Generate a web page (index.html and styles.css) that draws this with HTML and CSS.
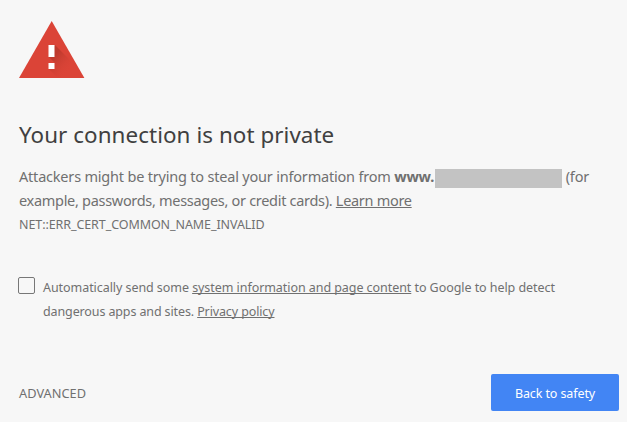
FILE: index.html
```html
<!DOCTYPE html>
<html lang="en">
<head>
    <meta charset="UTF-8">
    <meta name="viewport" content="width=device-width, initial-scale=1.0">
    <title>Privacy error</title>
    <link rel="stylesheet" href="styles.css">
</head>
<body>
    <div class="interstitial">
        <svg class="icon" viewBox="0 0 66 57" width="66" height="57">
            <defs>
                <linearGradient id="shade" gradientUnits="userSpaceOnUse" x1="34" y1="36" x2="50" y2="50">
                    <stop offset="0" stop-color="#a93226" stop-opacity="0.6"/>
                    <stop offset="1" stop-color="#db4437" stop-opacity="0"/>
                </linearGradient>
            </defs>
            <path d="M32.7 0 L65.4 57 H0 Z" fill="#db4437"/>
            <path d="M36 24 L50 38 L61 57 H39 L30 48 L36 42 L30 36 Z" fill="url(#shade)"/>
            <path d="M29.5 24h6v12h-6zM29.5 42h6v6h-6z" fill="#fff"/>
        </svg>

        <h1>Your connection is not private</h1>

        <p class="message">
            <span class="line first">Attackers might be trying to steal your information from <strong>www.</strong><span class="redacted"></span> (for</span>
            <span class="line second">example, passwords, messages, or credit cards). <a href="#">Learn more</a></span>
        </p>
        <div class="error-code">NET::ERR_CERT_COMMON_NAME_INVALID</div>

        <div class="opt-in">
            <span class="checkbox"></span>
            <label>
                <span class="line">Automatically send some <a href="#">system information and page content</a> to Google to help detect</span>
                <span class="line policy">dangerous apps and sites. <a href="#">Privacy policy</a></span>
            </label>
        </div>

        <div class="buttons">
            <span class="details">ADVANCED</span>
            <button class="primary">Back to safety</button>
        </div>
    </div>
</body>
</html>
```
FILE: styles.css
```css
body {
    margin: 0;
    background: #f7f7f7;
    color: #707070;
    font-family: 'Noto Sans', 'Open Sans', sans-serif;
}

.interstitial {
    box-sizing: border-box;
    height: 422px;
    padding: 21px 8px 0 19px;
    overflow: hidden;
    white-space: nowrap;
}

.icon {
    display: block;
}

h1 {
    margin: 41px 0 0;
    color: #404040;
    font-size: 22.4px;
    font-weight: 400;
    letter-spacing: 0.06px;
    line-height: 32px;
}

.message {
    margin: 13px 0 0;
    font-size: 14.5px;
    line-height: 24px;
}

.line {
    display: block;
}

.first {
    letter-spacing: -0.2px;
}

.second {
    letter-spacing: -0.3px;
}

a {
    color: inherit;
    text-underline-offset: 1px;
    text-decoration-skip-ink: none;
}

.redacted {
    display: inline-block;
    width: 127px;
    height: 19px;
    margin: 0 0 0 1px;
    background: #c3c3c3;
    vertical-align: -6px;
}

.error-code {
    margin-top: 1px;
    font-size: 12.5px;
    letter-spacing: -0.08px;
    line-height: 24px;
}

.opt-in {
    display: flex;
    margin-top: 39px;
    font-size: 12.5px;
    letter-spacing: -0.06px;
    line-height: 24px;
}

.policy {
    letter-spacing: -0.12px;
}

.checkbox {
    box-sizing: border-box;
    width: 17px;
    height: 17px;
    margin: 1px 8px 0 -1px;
    border: 1px solid #777;
    border-radius: 2px;
}

.buttons {
    display: flex;
    align-items: center;
    justify-content: space-between;
    margin-top: 50px;
    font-size: 12.8px;
}

.primary {
    width: 128px;
    height: 37px;
    padding: 2px 0 0;
    border: none;
    border-radius: 2px;
    background: #4285f4;
    color: #fff;
    font: inherit;
    font-size: 12.5px;
    letter-spacing: -0.1px;
}
```
